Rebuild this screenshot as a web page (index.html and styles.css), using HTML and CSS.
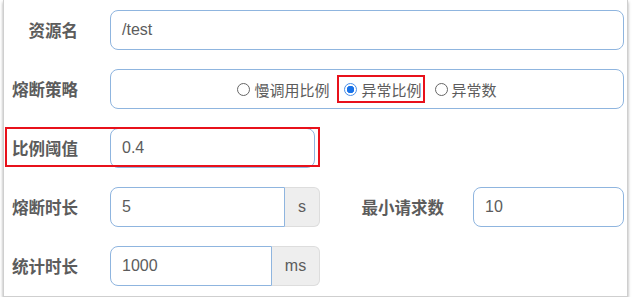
FILE: index.html
```html
<!DOCTYPE html>
<html lang="zh-CN">
<head>
    <meta charset="UTF-8">
    <title>熔断规则</title>
    <link rel="stylesheet" href="styles.css">
</head>
<body>
    <div class="panel">
        <div class="row">
            <label class="label">资源名</label>
            <div class="field wide">/test</div>
        </div>
        <div class="row">
            <label class="label">熔断策略</label>
            <div class="field wide radios">
                <span class="opt"><span class="dot"></span>慢调用比例</span>
                <span class="opt marked"><span class="dot on"></span>异常比例</span>
                <span class="opt"><span class="dot"></span>异常数</span>
            </div>
        </div>
        <div class="row">
            <label class="label">比例阈值</label>
            <div class="field ratio">0.4</div>
            <span class="redbox"></span>
        </div>
        <div class="row">
            <label class="label">熔断时长</label>
            <div class="group">
                <div class="field grp s-input">5</div>
                <span class="addon">s</span>
            </div>
            <label class="label side">最小请求数</label>
            <div class="field wide">10</div>
        </div>
        <div class="row">
            <label class="label">统计时长</label>
            <div class="group">
                <div class="field grp ms-input">1000</div>
                <span class="addon">ms</span>
            </div>
        </div>
    </div>
</body>
</html>
```

FILE: styles.css
```css
body {
    margin: 0;
    background: #fff;
    font-family: "Liberation Sans", "Noto Sans CJK SC", sans-serif;
    color: #555;
}
.panel {
    margin-left: 3px;
    width: 625px;
    height: 297px;
    box-sizing: border-box;
    border: 1px solid #cfcfcf;
    border-top: none;
    box-shadow: 0 2px 3px rgba(0, 0, 0, 0.35);
    padding: 10px 3px 0 0;
    display: flex;
    flex-direction: column;
    gap: 19px;
}
.row {
    position: relative;
    display: flex;
    align-items: center;
    height: 40px;
}
.label {
    width: 74px;
    margin-right: 32px;
    text-align: right;
    font-family: "Noto Sans CJK SC", sans-serif;
    font-weight: bold;
    font-size: 16.5px;
    color: #5c5c5c;
}
.label.side {
    width: 84px;
    margin-left: 40px;
    margin-right: 29px;
}
.field {
    height: 40px;
    box-sizing: border-box;
    border: 1px solid #8fb5df;
    border-radius: 8px;
    padding: 0 11px;
    display: flex;
    align-items: center;
    font-size: 16px;
    color: #5c5c5c;
}
.wide {
    flex: 1;
}
.ratio {
    width: 205px;
}
.redbox {
    position: absolute;
    left: 1px;
    top: -1px;
    width: 315px;
    height: 40px;
    box-sizing: border-box;
    border: 2px solid #e8111b;
}
.radios {
    justify-content: center;
    gap: 8px;
    font-family: "Noto Sans CJK SC", sans-serif;
    font-size: 15px;
}
.opt {
    display: flex;
    align-items: center;
    gap: 4px;
}
.opt.marked {
    height: 28px;
    box-sizing: border-box;
    border: 2px solid #e8111b;
    padding: 0 1px 0 5px;
    margin-right: 2px;
}
.dot {
    width: 13px;
    height: 13px;
    box-sizing: border-box;
    border: 1px solid #666;
    border-radius: 50%;
}
.dot.on {
    border: 1px solid #4a8fe8;
    background: radial-gradient(circle, #1a73e8 0 3.5px, #fff 4px);
}
.group {
    display: flex;
    width: 210px;
    height: 40px;
}
.grp {
    border-radius: 8px 0 0 8px;
}
.s-input {
    width: 175px;
}
.ms-input {
    width: 162px;
}
.addon {
    flex: 1;
    display: flex;
    align-items: center;
    justify-content: center;
    background: #eee;
    border: 1px solid #ddd;
    border-left: none;
    border-radius: 0 6px 6px 0;
    font-size: 16px;
    color: #5c5c5c;
}
```
